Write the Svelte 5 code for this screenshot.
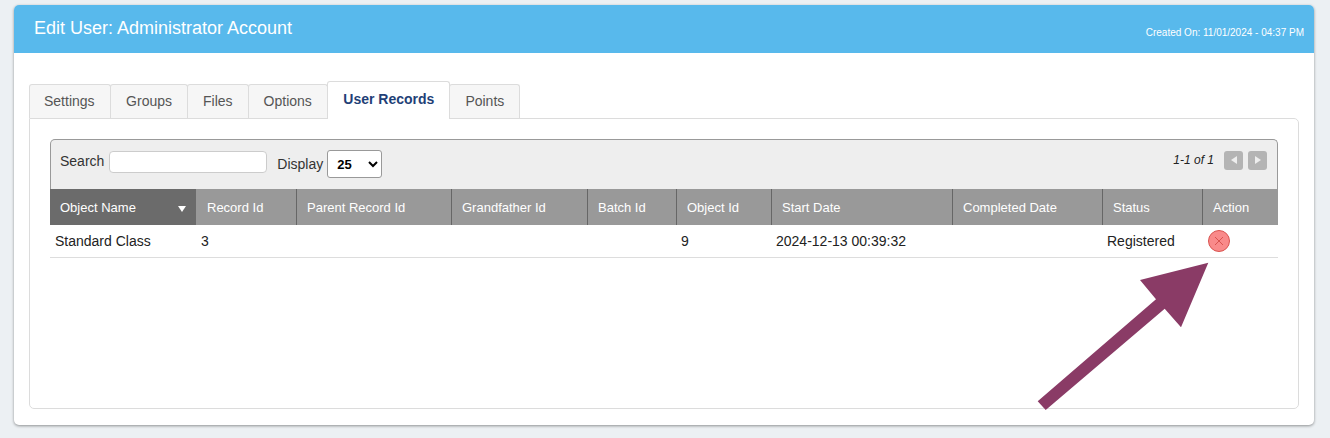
<script>
	const tabs = ['Settings', 'Groups', 'Files', 'Options', 'User Records', 'Points'];
	const activeTab = 'User Records';

	const columns = [
		{ label: 'Object Name', width: 146 },
		{ label: 'Record Id', width: 100 },
		{ label: 'Parent Record Id', width: 155 },
		{ label: 'Grandfather Id', width: 136 },
		{ label: 'Batch Id', width: 89 },
		{ label: 'Object Id', width: 95 },
		{ label: 'Start Date', width: 181 },
		{ label: 'Completed Date', width: 150 },
		{ label: 'Status', width: 100 },
		{ label: 'Action', width: 76 }
	];

	const rows = [['Standard Class', '3', '', '', '', '9', '2024-12-13 00:39:32', '', 'Registered']];
</script>

<div class="page">
	<div class="card">
		<div class="card-header">
			<h1>Edit User: Administrator Account</h1>
			<span class="created">Created On: 11/01/2024 - 04:37 PM</span>
		</div>

		<div class="card-body">
			<div class="tabs">
				{#each tabs as tab}
					<div class="tab" class:active={tab === activeTab}>{tab}</div>
				{/each}
			</div>

			<div class="panel">
				<div class="toolbar">
					<label class="search">Search <input type="text" /></label>
					<label class="display">
						Display
						<select>
							<option>25</option>
						</select>
					</label>
					<div class="pager">
						<em>1-1 of 1</em>
						<button class="page-btn" aria-label="Previous"><span class="tri left"></span></button>
						<button class="page-btn" aria-label="Next"><span class="tri right"></span></button>
					</div>
				</div>

				<table>
					<colgroup>
						{#each columns as col}
							<col style="width: {col.width}px" />
						{/each}
					</colgroup>
					<thead>
						<tr>
							{#each columns as col, i}
								<th class:sorted={i === 0}>
									{col.label}
									{#if i === 0}<span class="sort"></span>{/if}
								</th>
							{/each}
						</tr>
					</thead>
					<tbody>
						{#each rows as row}
							<tr>
								{#each row as cell}
									<td>{cell}</td>
								{/each}
								<td class="action">
									<span class="remove">
										<svg width="10" height="10" viewBox="0 0 10 10">
											<path d="M1 1 L9 9 M9 1 L1 9" stroke="#d9534f" stroke-width="1" fill="none" />
										</svg>
									</span>
								</td>
							</tr>
						{/each}
					</tbody>
				</table>
			</div>
		</div>
	</div>

	<svg class="arrow" width="1330" height="438" viewBox="0 0 1330 438">
		<polygon
			points="1208.3,262.7 1140,280 1156,299.3 1037.7,401.3 1045.7,410 1164.7,308.7 1181,327.3"
			fill="#8a3b66"
		/>
	</svg>
</div>

<style>
	:global(body) {
		margin: 0;
		background: #ecf0f3;
		font-family: 'Liberation Sans', Arial, sans-serif;
	}

	.page {
		position: relative;
		width: 1330px;
		height: 438px;
		padding: 5px 16px 0 14px;
		box-sizing: border-box;
		overflow: hidden;
	}

	.card {
		height: 420px;
		background: #fff;
		border-radius: 5px;
		box-shadow: 0 1px 3px rgba(0, 0, 0, 0.4);
		overflow: hidden;
	}

	.card-header {
		height: 48px;
		background: #58b9ec;
		color: #fff;
		display: flex;
		justify-content: space-between;
		padding: 0 10px 0 20px;
	}

	h1 {
		margin: 0;
		font-size: 18px;
		font-weight: 400;
		line-height: 46px;
	}

	.created {
		font-size: 10px;
		line-height: 56px;
	}

	.card-body {
		padding: 28px 15px 0;
	}

	.tabs {
		display: flex;
		align-items: flex-end;
		height: 38px;
		position: relative;
		z-index: 1;
	}

	.tab {
		height: 34px;
		box-sizing: border-box;
		padding: 0 15px;
		line-height: 33px;
		font-size: 14px;
		color: #555;
		background: #f6f6f6;
		border: 1px solid #dcdcdc;
		border-bottom: none;
		margin-right: -1px;
		margin-bottom: 1px;
		border-radius: 3px 3px 0 0;
	}

	.tab:first-child {
		padding-left: 14px;
	}

	.tab:nth-child(2) {
		padding-left: 15.5px;
	}

	.tab:nth-child(4) {
		padding-right: 15.5px;
	}

	.tab.active {
		height: 38px;
		margin-bottom: 0;
		background: #fff;
		color: #1f3f77;
		font-weight: 700;
		line-height: 34px;
	}

	.panel {
		height: 291px;
		box-sizing: border-box;
		margin-top: -1px;
		border: 1px solid #dcdcdc;
		border-radius: 0 5px 5px 5px;
		padding: 20px 20px 0;
	}

	.toolbar {
		height: 50px;
		box-sizing: border-box;
		background: #eee;
		border: 1px solid #999;
		border-bottom: none;
		border-radius: 5px 5px 0 0;
		font-size: 14px;
		color: #333;
		display: flex;
		padding: 10px 10px 0 9px;
	}

	.search {
		display: flex;
		align-items: center;
		gap: 5px;
		height: 22px;
		margin-top: 0;
	}

	.search input {
		width: 158px;
		height: 22px;
		box-sizing: border-box;
		border: 1px solid #ccc;
		border-radius: 4px;
		background: #fff;
		padding: 0;
		margin-top: 1px;
	}

	.display {
		display: flex;
		align-items: center;
		gap: 4px;
		height: 28px;
		margin-left: 10px;
	}

	.display select {
		width: 55px;
		height: 28px;
		font: 700 13px 'Liberation Sans', Arial, sans-serif;
		color: #000;
		background: #fff;
		border: 1px solid #999;
		border-radius: 3px;
		padding-left: 5px;
	}

	.pager {
		margin-left: auto;
		display: flex;
		align-items: center;
		gap: 5px;
		height: 20px;
		font-size: 12px;
		color: #222;
	}

	.pager em {
		margin-right: 5px;
	}

	.page-btn {
		width: 19px;
		height: 19px;
		padding: 0;
		border: none;
		border-radius: 3px;
		background: #b4b4b4;
		display: flex;
		align-items: center;
		justify-content: center;
	}

	.tri {
		width: 0;
		height: 0;
		border-top: 4px solid transparent;
		border-bottom: 4px solid transparent;
	}

	.tri.left {
		border-right: 6px solid #eee;
	}

	.tri.right {
		border-left: 6px solid #eee;
	}

	table {
		width: 1228px;
		table-layout: fixed;
		border-collapse: separate;
		border-spacing: 0;
		font-size: 14px;
	}

	th {
		height: 36px;
		padding: 0 10px;
		box-sizing: border-box;
		background: #999;
		color: #fff;
		font-size: 13px;
		font-weight: 400;
		text-align: left;
		border-left: 1px solid #666;
		white-space: nowrap;
		position: relative;
	}

	th:first-child {
		border-left: none;
	}

	th:nth-child(2) {
		border-left: none;
		padding-left: 11px;
	}

	th.sorted {
		background: #6b6b6b;
	}

	.sort {
		position: absolute;
		right: 10px;
		top: 17px;
		width: 0;
		height: 0;
		border-left: 4px solid transparent;
		border-right: 4px solid transparent;
		border-top: 6px solid #fff;
	}

	td {
		height: 33px;
		padding: 0 5px;
		box-sizing: border-box;
		color: #222;
		border-bottom: 1px solid #ddd;
	}

	td.action {
		padding-left: 6px;
	}

	.remove {
		display: flex;
		align-items: center;
		justify-content: center;
		width: 22px;
		height: 22px;
		box-sizing: border-box;
		border: 1px solid #d9534f;
		border-radius: 50%;
		background: #f98a8a;
	}

	.arrow {
		position: absolute;
		left: 0;
		top: 0;
		pointer-events: none;
	}
</style>
